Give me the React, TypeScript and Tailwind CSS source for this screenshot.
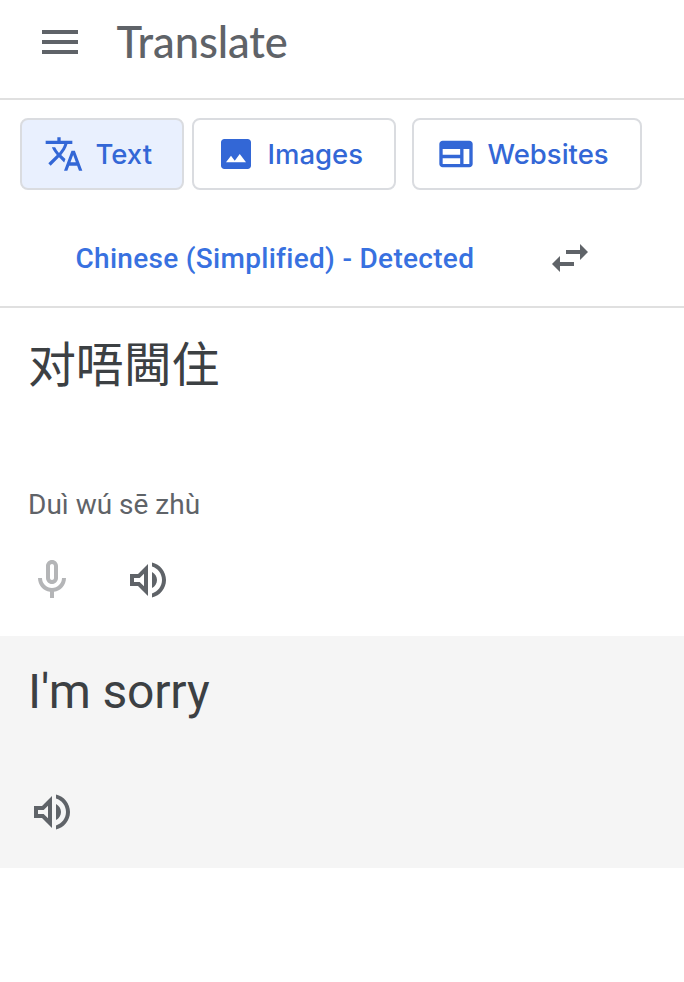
import type { ReactNode } from "react";
import clsx from "clsx";

const PATHS = {
  menu: "M3 18h18v-2H3v2zm0-5h18v-2H3v2zm0-7v2h18V6H3z",
  translate:
    "M12.87 15.07l-2.54-2.51.03-.03c1.74-1.94 2.98-4.17 3.71-6.53H17V4h-7V2H8v2H1v1.99h11.17C11.5 7.92 10.44 9.75 9 11.35 8.07 10.32 7.3 9.19 6.69 8h-2c.73 1.63 1.73 3.17 2.98 4.56l-5.09 5.02L4 19l5-5 3.11 3.11.76-2.04zM18.5 10h-2L12 22h2l1.12-3h4.75L21 22h2l-4.5-12zm-2.62 7l1.62-4.33L19.12 17h-3.24z",
  image:
    "M5 21q-.825 0-1.413-.588T3 19V5q0-.825.588-1.413T5 3h14q.825 0 1.413.588T21 5v14q0 .825-.588 1.413T19 21H5zm1-4h12l-3.75-5-3 4L9 13l-3 4z",
  web: "M4 20q-.825 0-1.413-.588T2 18V6q0-.825.588-1.413T4 4h16q.825 0 1.413.588T22 6v12q0 .825-.588 1.413T20 20H4zm0-2h10.5v-3.5H4V18zm12.5 0H20V9h-3.5v9zM4 12.5h10.5V9H4v3.5z",
  swap: "M6.99 11L3 15l3.99 4v-3H14v-2H6.99v-3zM21 9l-3.99-4v3H10v2h7.01v3L21 9z",
  mic: "M12 14c1.66 0 3-1.34 3-3V5c0-1.66-1.34-3-3-3S9 3.34 9 5v6c0 1.66 1.34 3 3 3zm-1-9c0-.55.45-1 1-1s1 .45 1 1v6c0 .55-.45 1-1 1s-1-.45-1-1V5zm6 6c0 2.76-2.24 5-5 5s-5-2.24-5-5H5c0 3.53 2.61 6.43 6 6.92V21h2v-3.08c3.39-.49 6-3.39 6-6.92h-2z",
  volume:
    "M3 9v6h4l5 5V4L7 9H3zm7-.17v6.34L7.83 13H5v-2h2.83L10 8.83zM16.5 12c0-1.77-1.02-3.29-2.5-4.03v8.05c1.48-.73 2.5-2.25 2.5-4.02zM14 3.23v2.06c2.89.86 5 3.54 5 6.71s-2.11 5.85-5 6.71v2.06c4.01-.91 7-4.49 7-8.77s-2.99-7.86-7-8.77z",
};

function Icon({ name, className = "size-12" }: { name: keyof typeof PATHS; className?: string }) {
  return (
    <svg viewBox="0 0 24 24" fill="currentColor" fillRule="evenodd" className={clsx("shrink-0", className)}>
      <path d={PATHS[name]} />
    </svg>
  );
}

function IconButton({ label, color = "text-[#5f6368]", children }: { label: string; color?: string; children: ReactNode }) {
  return (
    <button type="button" aria-label={label} className={clsx("block size-12", color)}>
      {children}
    </button>
  );
}

const TABS = [
  { icon: "translate", label: "Text", width: "w-[164px]", active: true },
  { icon: "image", label: "Images", width: "ml-2 w-[204px]", active: false },
  { icon: "web", label: "Websites", width: "ml-4 w-[230px]", active: false },
] as const;

export default function App() {
  return (
    <div className="h-[982px] w-[684px] overflow-hidden bg-white font-['Roboto','Noto_Sans_CJK_SC',sans-serif]">
      <header className="flex h-[100px] border-b-2 border-[#e0e0e0] pl-9 pt-[18px]">
        <IconButton label="Main menu">
          <Icon name="menu" />
        </IconButton>
        <h1 className="ml-[32.5px] font-['Lato',sans-serif] text-[43.5px] font-medium leading-[47px] tracking-[-0.1px] text-[#5f6368]">
          Translate
        </h1>
      </header>

      <nav className="flex px-5 pt-[18px]">
        {TABS.map((t) => (
          <button
            key={t.label}
            type="button"
            className={clsx(
              "flex h-[72px] shrink-0 items-center rounded-lg border-2 border-[#dadce0] pl-[22px] text-[#3367d6]",
              t.width,
              t.active && "bg-[#e9f0fe]",
            )}
          >
            <Icon name={t.icon} className="size-10" />
            <span className="ml-[11.5px] pt-0.5 font-['Inter',sans-serif] text-[27.5px] font-medium">{t.label}</span>
          </button>
        ))}
      </nav>

      <div className="mt-5 flex h-[98px] items-center justify-between border-b-2 border-[#e0e0e0] pl-[75.5px] pr-[90px]">
        <span className="pt-0.5 text-[28px] font-medium tracking-[0.3px] text-[#3871e0]">
          Chinese (Simplified) - Detected
        </span>
        <IconButton label="Swap languages">
          <Icon name="swap" />
        </IconButton>
      </div>

      <section className="flex h-[328px] flex-col px-7 pt-[26px]">
        <p className="h-[147px] text-[48px] leading-[64px] tracking-[-0.15px] text-[#3c4043]" lang="zh-CN">
          对唔閪住
        </p>
        <p className="text-[28px] leading-[48px] text-[#5f6368]">Duì wú sē zhù</p>
        <div className="mt-[27px] flex gap-12">
          <IconButton label="Translate by voice" color="text-[#b4b5b7]">
            <Icon name="mic" />
          </IconButton>
          <IconButton label="Listen to source text">
            <Icon name="volume" />
          </IconButton>
        </div>
      </section>

      <section className="h-[232px] bg-[#f5f5f5] px-7 pt-6">
        <p className="h-32 text-[48px] leading-[64px] tracking-[-0.15px] text-[#3c4043]">I'm sorry</p>
        <IconButton label="Listen to translation">
          <Icon name="volume" />
        </IconButton>
      </section>
    </div>
  );
}
